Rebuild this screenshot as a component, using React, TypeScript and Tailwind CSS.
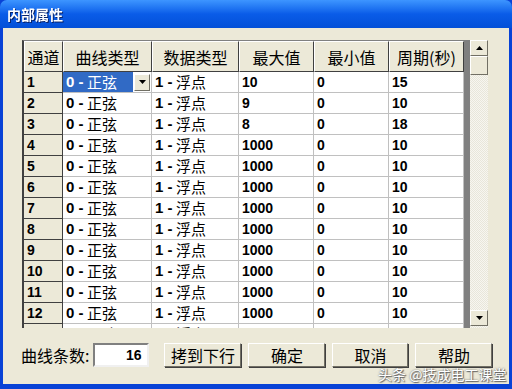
import React from "react"

const cols = [41, 89, 87, 75, 75, 75]
const headers = ["通道", "曲线类型", "数据类型", "最大值", "最小值", "周期(秒)"]
const rows = [
  ["10", "0", "15"],
  ["9", "0", "10"],
  ["8", "0", "18"],
  ["1000", "0", "10"],
  ["1000", "0", "10"],
  ["1000", "0", "10"],
  ["1000", "0", "10"],
  ["1000", "0", "10"],
  ["1000", "0", "10"],
  ["1000", "0", "10"],
  ["1000", "0", "10"],
  ["1000", "0", "10"],
  ["1000", "0", "10"],
]

const cjk = "font-['Noto_Sans_CJK_SC',sans-serif]"
const num = "font-['Liberation_Sans',sans-serif] font-bold"

function Btn({ label, w }: { label: string; w: string }) {
  return (
    <button
      className={`${w} h-[24px] bg-[#ece9d8] border border-t-white border-l-white border-b-[#716f64] border-r-[#716f64] shadow-[1px_1px_0_#404040] text-[16px] leading-none text-black ${cjk}`}
    >
      {label}
    </button>
  )
}

function Arrow({ up }: { up?: boolean }) {
  return (
    <div className="h-[16px] w-full bg-[#ece9d8] border border-t-white border-l-white border-b-[#716f64] border-r-[#716f64] flex items-center justify-center">
      <svg width="7" height="4" viewBox="0 0 7 4">
        <path d={up ? "M0 4 L3.5 0 L7 4 Z" : "M0 0 L3.5 4 L7 0 Z"} fill="#000" />
      </svg>
    </div>
  )
}

export default function App() {
  return (
    <div className="w-[512px] h-[389px] flex flex-col bg-[#0842d6] overflow-hidden relative">
      {/* title bar */}
      <div className="h-[28px] shrink-0 rounded-t-[7px] bg-gradient-to-b from-[#3d95ff] via-[#0a5ce8] to-[#0350d8] flex items-center pl-[7px]">
        <span className={`text-white font-bold text-[14px] ${cjk} drop-shadow-[1px_1px_0_#0a246a]`}>内部属性</span>
      </div>
      <div className="flex-1 mx-[3px] mb-[5px] bg-[#ece9d8] flex flex-col">
        {/* grid + scrollbar */}
        <div className="mt-[12px] ml-[19px] flex h-[288px]">
          <div className="flex flex-col w-[448px] h-[288px] overflow-hidden bg-[#808080] border-l-2 border-t border-l-[#404040] border-t-[#808080]">
            <div className="flex h-[31px] shrink-0">
              {headers.map((h, i) => (
                <div
                  key={h}
                  style={{ width: cols[i] - (i === 0 ? 2 : 0) }}
                  className={`shrink-0 bg-[#ece9d8] border-t border-l border-t-white border-l-white border-r border-b border-r-[#404040] border-b-[#404040] flex items-center justify-center text-[16px] text-black ${cjk}`}
                >
                  {h}
                </div>
              ))}
            </div>
            {rows.map((r, ri) => (
              <div key={ri} className="flex h-[21px] shrink-0">
                <div
                  style={{ width: cols[0] - 2 }}
                  className={`shrink-0 bg-[#ece9d8] border-r border-b border-r-[#404040] border-b-[#404040] flex items-center pl-[3px] text-[14px] text-black ${num}`}
                >
                  {ri + 1}
                </div>
                {ri === 0 ? (
                  <div style={{ width: cols[1] }} className="shrink-0 bg-white border-r border-b border-[#c0c0c0] flex items-center">
                    <div className="w-[70px] h-full bg-[#316ac5] flex items-center pl-[3px] text-white text-[15px]">
                      <span className={num}>0 - </span>
                      <span className={cjk}>&nbsp;正弦</span>
                    </div>
                    <div className="w-[16px] h-[17px] ml-[1px] bg-[#ece9d8] border border-t-white border-l-white border-b-[#716f64] border-r-[#716f64] flex items-center justify-center">
                      <svg width="7" height="4" viewBox="0 0 7 4">
                        <path d="M0 0 L3.5 4 L7 0 Z" fill="#000" />
                      </svg>
                    </div>
                  </div>
                ) : (
                  <div style={{ width: cols[1] }} className="shrink-0 bg-white border-r border-b border-[#c0c0c0] flex items-center pl-[3px] text-[15px] text-black">
                    <span className={num}>0 - </span>
                    <span className={cjk}>&nbsp;正弦</span>
                  </div>
                )}
                <div style={{ width: cols[2] }} className="shrink-0 bg-white border-r border-b border-[#c0c0c0] flex items-center pl-[3px] text-[15px] text-black">
                  <span className={num}>1 - </span>
                  <span className={cjk}>&nbsp;浮点</span>
                </div>
                {r.map((v, ci) => (
                  <div
                    key={ci}
                    style={{ width: cols[3 + ci] }}
                    className={`shrink-0 bg-white border-r border-b border-[#c0c0c0] flex items-center pl-[3px] text-[14px] text-black ${num}`}
                  >
                    {v}
                  </div>
                ))}
              </div>
            ))}
          </div>
          {/* scrollbar */}
          <div className="w-[18px] h-[288px] flex flex-col bg-[repeating-conic-gradient(#f7f6f0_0_25%,#e8e6da_0_50%)] bg-[length:2px_2px]">
            <Arrow up />
            <div className="h-[19px] w-full bg-[#ece9d8] border border-t-white border-l-white border-b-[#716f64] border-r-[#716f64]" />
            <div className="flex-1" />
            <Arrow />
            <div className="h-[2px]" />
          </div>
        </div>
        {/* bottom controls */}
        <div className="flex items-center mt-[15px] ml-[18px]">
          <span className={`text-[16px] text-black ${cjk}`}>曲线条数:</span>
          <div className={`ml-[4px] w-[56px] h-[24px] bg-white border-2 border-t-[#808080] border-l-[#808080] border-b-[#f0f0f0] border-r-[#f0f0f0] flex items-center justify-end pr-[6px] text-[14px] ${num}`}>
            16
          </div>
          <div className="ml-[15px] flex gap-[7px]">
            <Btn label="拷到下行" w="w-[77px]" />
            <Btn label="确定" w="w-[77px]" />
            <Btn label="取消" w="w-[76px]" />
            <Btn label="帮助" w="w-[77px]" />
          </div>
        </div>
      </div>
      <div className={`absolute left-[378px] top-[364px] whitespace-nowrap text-[14px] text-white ${cjk} [text-shadow:0_0_2px_#555,1px_1px_1px_#666]`}>
        头条 @技成电工课堂
      </div>
    </div>
  )
}
